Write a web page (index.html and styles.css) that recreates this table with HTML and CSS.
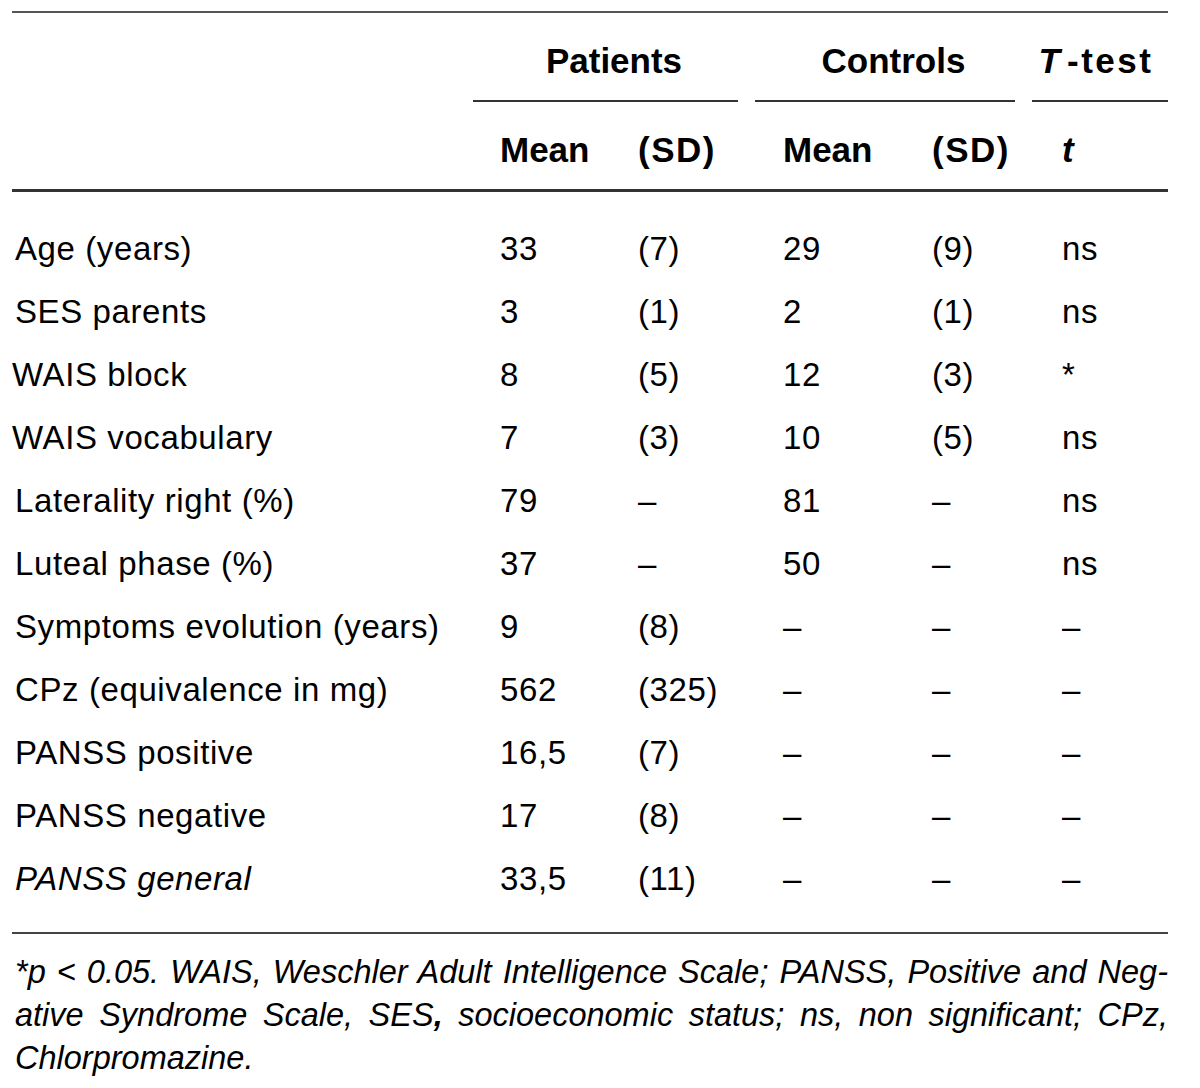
FILE: index.html
```html
<!DOCTYPE html>
<html lang="en">
<head>
<meta charset="utf-8">
<title>Table</title>
<link rel="stylesheet" href="styles.css">
</head>
<body>
<div class="page">
  <div class="thead">
    <div class="hrow">
      <div class="hcell"></div>
      <div class="hcell grp gap"><div class="glabel">Patients</div><div class="gline"></div></div>
      <div class="hcell grp gap"><div class="glabel">Controls</div><div class="gline"></div></div>
      <div class="hcell grp"><div class="glabel"><i>T</i><span class="dash">-test</span></div><div class="gline"></div></div>
    </div>
    <div class="hrow sub">
      <div class="hcell"></div>
      <div class="hcell c-m1">Mean</div>
      <div class="hcell c-s1 sd">(SD)</div>
      <div class="hcell c-m2">Mean</div>
      <div class="hcell c-s2 sd">(SD)</div>
      <div class="hcell c-t"><i>t</i></div>
    </div>
  </div>
  <div class="tbody">
    <div class="row"><div class="lbl">Age (years)</div><div class="c-m1">33</div><div class="c-s1">(7)</div><div class="c-m2">29</div><div class="c-s2">(9)</div><div class="c-t">ns</div></div>
    <div class="row"><div class="lbl">SES parents</div><div class="c-m1">3</div><div class="c-s1">(1)</div><div class="c-m2">2</div><div class="c-s2">(1)</div><div class="c-t">ns</div></div>
    <div class="row"><div class="lbl wais">WAIS block</div><div class="c-m1">8</div><div class="c-s1">(5)</div><div class="c-m2">12</div><div class="c-s2">(3)</div><div class="c-t">*</div></div>
    <div class="row"><div class="lbl wais">WAIS vocabulary</div><div class="c-m1">7</div><div class="c-s1">(3)</div><div class="c-m2">10</div><div class="c-s2">(5)</div><div class="c-t">ns</div></div>
    <div class="row"><div class="lbl">Laterality right (%)</div><div class="c-m1">79</div><div class="c-s1">–</div><div class="c-m2">81</div><div class="c-s2">–</div><div class="c-t">ns</div></div>
    <div class="row"><div class="lbl">Luteal phase (%)</div><div class="c-m1">37</div><div class="c-s1">–</div><div class="c-m2">50</div><div class="c-s2">–</div><div class="c-t">ns</div></div>
    <div class="row"><div class="lbl">Symptoms evolution (years)</div><div class="c-m1">9</div><div class="c-s1">(8)</div><div class="c-m2">–</div><div class="c-s2">–</div><div class="c-t">–</div></div>
    <div class="row"><div class="lbl">CPz (equivalence in mg)</div><div class="c-m1">562</div><div class="c-s1">(325)</div><div class="c-m2">–</div><div class="c-s2">–</div><div class="c-t">–</div></div>
    <div class="row"><div class="lbl">PANSS positive</div><div class="c-m1">16,5</div><div class="c-s1">(7)</div><div class="c-m2">–</div><div class="c-s2">–</div><div class="c-t">–</div></div>
    <div class="row"><div class="lbl">PANSS negative</div><div class="c-m1">17</div><div class="c-s1">(8)</div><div class="c-m2">–</div><div class="c-s2">–</div><div class="c-t">–</div></div>
    <div class="row"><div class="lbl"><i>PANSS general</i></div><div class="c-m1">33,5</div><div class="c-s1">(11)</div><div class="c-m2">–</div><div class="c-s2">–</div><div class="c-t">–</div></div>
  </div>
  <div class="note">
    <div class="nline just">*p &lt; 0.05. WAIS, Weschler Adult Intelligence Scale; PANSS, Positive and Neg-</div>
    <div class="nline just">ative Syndrome Scale, SES<b>,</b> socioeconomic status; ns, non significant; CPz,</div>
    <div class="nline">Chlorpromazine.</div>
  </div>
</div>
</body>
</html>
```

FILE: styles.css
```css
html, body {
  margin: 0;
  padding: 0;
  background: #ffffff;
}

body {
  font-family: "Liberation Sans", Arial, sans-serif;
  color: #000;
}

.page {
  width: 1156px;
  margin-left: 12px;
  padding-top: 11px;
}

.thead {
  border-top: 2px solid #555;
  border-bottom: 3px solid #333;
}

.hrow {
  display: grid;
  grid-template-columns: 461px 282px 277px 136px;
  height: 89px;
  font-weight: bold;
  font-size: 35px;
}

.hrow.sub {
  grid-template-columns: 461px 138px 144px 150px 127px 136px;
  height: 87px;
}

.hcell {
  box-sizing: border-box;
  padding-top: 28px;
  line-height: 40px;
}

.sd {
  letter-spacing: 1.5px;
}

.grp {
  display: flex;
  flex-direction: column;
}

.glabel {
  text-align: center;
  line-height: 40px;
}

.dash {
  margin-left: 7px;
  letter-spacing: 2.5px;
}

.gline {
  margin-top: auto;
  height: 2px;
  background: #333;
}

.grp.gap .gline {
  margin-right: 17px;
}

.grp:not(.gap) .glabel {
  padding-right: 8px;
}

.tbody {
  padding: 25px 0 22px;
  border-bottom: 2px solid #444;
  font-size: 33px;
  letter-spacing: 0.6px;
}

.row {
  display: grid;
  grid-template-columns: 461px 138px 144px 150px 127px 136px;
  height: 63px;
  line-height: 63px;
}

.lbl {
  padding-left: 3px;
}

.lbl.wais {
  padding-left: 0;
}

.c-m1, .c-s1, .c-s2 {
  padding-left: 27px;
}

.c-m2 {
  padding-left: 28px;
}

.c-t {
  padding-left: 30px;
}

.note {
  padding-top: 17px;
  font-size: 32.5px;
  font-style: italic;
  line-height: 43px;
}

.nline {
  padding-left: 3px;
  white-space: nowrap;
}

.nline.just {
  white-space: normal;
  text-align: justify;
  text-align-last: justify;
}
```
